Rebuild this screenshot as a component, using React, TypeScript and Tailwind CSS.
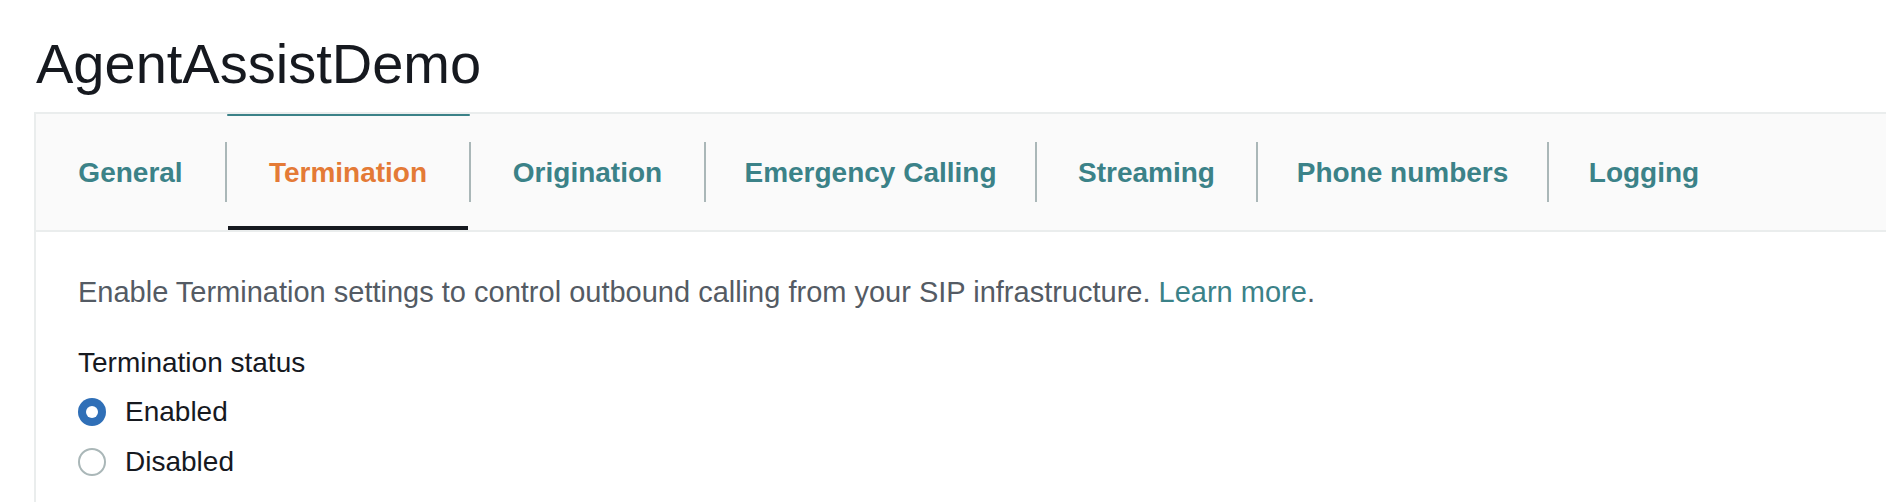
import { useState } from "react";

const tabs = [
  { label: "General", width: "w-[189px]" },
  { label: "Termination", width: "w-[242px]" },
  { label: "Origination", width: "w-[233px]" },
  { label: "Emergency Calling", width: "w-[329px]" },
  { label: "Streaming", width: "w-[219px]" },
  { label: "Phone numbers", width: "w-[289px]" },
  { label: "Logging", width: "w-[190px]" },
];

const Radio = ({ checked }: { checked: boolean }) =>
  checked ? (
    <span className="flex h-[28px] w-[28px] items-center justify-center rounded-full bg-[#2f6fb7]">
      <span className="h-[12px] w-[12px] rounded-full bg-white" />
    </span>
  ) : (
    <span className="h-[28px] w-[28px] rounded-full border-2 border-[#aab7b8] bg-white" />
  );

export default function App() {
  const [active, setActive] = useState("Termination");
  const [status, setStatus] = useState("Enabled");

  return (
    <div className="h-[502px] w-full overflow-hidden bg-white font-['Liberation_Sans',Arial,sans-serif]">
      <h1 className="pl-[36px] pt-[36px] text-[56px] font-normal leading-[56px] text-[#16191f]">
        AgentAssistDemo
      </h1>

      <div className="ml-[34px] mt-[20px] border-l-2 border-t-2 border-[#eaeded]">
        {/* tab bar */}
        <div className="flex h-[118px] items-stretch border-b-2 border-[#eaeded] bg-[#fafafa]">
          {tabs.map((t, i) => (
            <div key={t.label} className="flex items-stretch">
              {i > 0 && <div className="h-[60px] w-[2px] self-center bg-[#aab7b8]" />}
              <button
                onClick={() => setActive(t.label)}
                className={`relative flex ${t.width} items-center justify-center pt-[2px] text-[28px] font-bold leading-[40px] ${
                  active === t.label ? "text-[#e47a36]" : "text-[#3b8288]"
                }`}
              >
                {active === t.label && (
                  <>
                    <span className="absolute left-0 right-[-1px] top-0 h-[2px] rounded-full bg-[#3b8288]" />
                    <span className="absolute bottom-0 left-[1px] right-[1px] h-[4px] bg-[#16191f]" />
                  </>
                )}
                {t.label}
              </button>
            </div>
          ))}
        </div>

        {/* content */}
        <div className="pb-[40px] pl-[42px] pt-[40px]">
          <p className="text-[29px] leading-[40px] text-[#545b64]">
            Enable Termination settings to control outbound calling from your SIP infrastructure.{" "}
            <a className="text-[#3b8288]" href="#">
              Learn more
            </a>
            .
          </p>
          <div className="mt-[31px] text-[28px] leading-[40px] text-[#16191f]">Termination status</div>
          <div className="mt-[9px] flex flex-col gap-[10px]">
            {["Enabled", "Disabled"].map((s) => (
              <label
                key={s}
                onClick={() => setStatus(s)}
                className="flex h-[40px] cursor-pointer items-center gap-[19px] text-[28px] leading-[40px] text-[#16191f]"
              >
                <Radio checked={status === s} />
                {s}
              </label>
            ))}
          </div>
        </div>
      </div>
    </div>
  );
}
